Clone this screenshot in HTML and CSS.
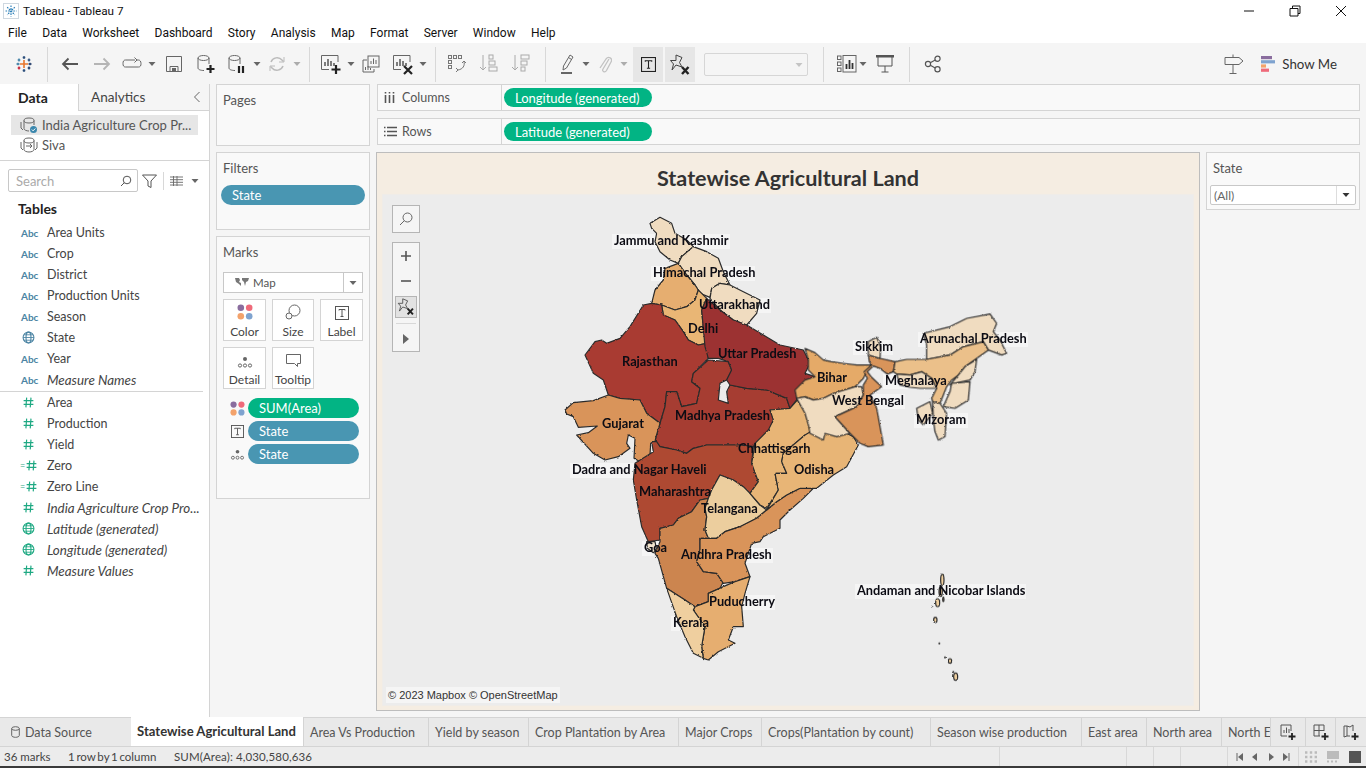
FILE: index.html
```html
<!DOCTYPE html>
<html lang="en">
<head>
<meta charset="utf-8">
<title>Tableau - Tableau 7</title>
<link rel="stylesheet" href="styles.css">
</head>
<body>
<svg class="defs" width="0" height="0">
  <defs>
    <symbol id="globe" viewBox="0 0 12 12"><circle cx="6" cy="6" r="5" fill="none" stroke="currentColor"/><ellipse cx="6" cy="6" rx="2.3" ry="5" fill="none" stroke="currentColor"/><path d="M1 6h10M1.8 3.5h8.4M1.8 8.5h8.4" stroke="currentColor" stroke-width=".8"/></symbol>
    <symbol id="hash" viewBox="0 0 12 12"><path d="M4.3 1.5 3.6 10.5M8.3 1.5 7.6 10.5M1.5 4.2h9M1.5 7.8h9" fill="none" stroke="currentColor" stroke-width="1.1"/></symbol>
    <symbol id="dots" viewBox="0 0 16 16"><circle cx="3.8" cy="3.8" r="3.3" fill="#8a6d9e"/><circle cx="12.2" cy="3.8" r="3.3" fill="#ef6a7a"/><circle cx="3.8" cy="12.2" r="3.3" fill="#f3a26b"/><circle cx="12.2" cy="12.200" r="3.3" fill="#7fa3cf"/></symbol>
    <symbol id="detail" viewBox="0 0 16 12"><circle cx="8" cy="3" r="2" fill="#666"/><g fill="none" stroke="#666"><circle cx="3" cy="9.5" r="1.6"/><circle cx="8" cy="9.5" r="1.6"/><circle cx="13" cy="9.5" r="1.6"/></g></symbol>
    <symbol id="tbox" viewBox="0 0 14 14"><rect x=".5" y=".5" width="13" height="13" fill="none" stroke="#555"/><path d="M4 4.5V3.5h6v1M7 3.5v7M5.5 10.5h3" fill="none" stroke="#555"/></symbol>
    <symbol id="pin" viewBox="0 0 22 22"><path d="M7 1 13 3.500 10.500 8.500 13 13 7 11 3 16 4.500 10 1.500 6.500 7 6.500Z" fill="none" stroke="#444"/><path d="M13 13 19.500 20M19.500 13 13 20" stroke="#222" stroke-width="2.400"/></symbol>
    <symbol id="caret" viewBox="0 0 8 6"><path d="M.5 1h7L4 5Z" fill="#666"/></symbol>
  </defs>
</svg>
<div class="app">
  <header class="titlebar">
    <svg class="applogo" viewBox="0 0 16 16"><rect x=".5" y=".5" width="15" height="15" fill="#fff" stroke="#cfd8e0"/><g stroke="#2c7fb8" stroke-width="1.2" fill="none"><path d="M8 2.5v11M2.5 8h11M4.2 4.2 11.8 11.8M11.8 4.2 4.2 11.8" stroke-dasharray="1.6 1"/></g></svg>
    <span class="apptitle">Tableau - Tableau 7</span>
    <div class="winctl">
      <svg viewBox="0 0 12 12"><path d="M1 6h10" stroke="#111"/></svg>
      <svg viewBox="0 0 12 12"><path d="M3.500 3V1h7.500v7.500H9M1 3.500h8v7.500H1Z" fill="none" stroke="#111"/></svg>
      <svg viewBox="0 0 12 12"><path d="M1 1 11 11M11 1 1 11" stroke="#111"/></svg>
    </div>
  </header>
  <nav class="menubar">
    <span>File</span><span>Data</span><span>Worksheet</span><span>Dashboard</span><span>Story</span><span>Analysis</span><span>Map</span><span>Format</span><span>Server</span><span>Window</span><span>Help</span>
  </nav>
  <div class="toolbar">
    <div class="tg g0">
      <span class="tb w47"><svg width="18" height="18" viewBox="0 0 18 18"><g stroke-width="1.300" fill="none"><path d="M9 5v8M5 9h8" stroke="#e8762c" stroke-width="1.600"/><path d="M9 1v3M7.700 2.500h2.600M14 3.500v3M12.700 5h2.600M9 14v3M7.700 15.500h2.600" stroke="#2c4f7c"/><path d="M4 3.500v3M2.700 5h2.600M1.500 9h3M3 7.700v2.600" stroke="#3f7fa6"/><path d="M14 11.500v3M12.700 13h2.600M13.500 9h3M15 7.700v2.600" stroke="#1f3a68"/><path d="M4 11.500v3M2.700 13h2.600" stroke="#c72035"/></g></svg></span>
    </div>
    <div class="tg g1">
      <span class="tb w32"><svg width="18" height="14" viewBox="0 0 18 14"><path d="M17 7H2M7.500 1.500 2 7l5.500 5.500" fill="none" stroke="#555" stroke-width="1.800"/></svg></span>
      <span class="tb w32"><svg width="18" height="14" viewBox="0 0 18 14"><path d="M1 7h15M10.500 1.500 16 7l-5.500 5.500" fill="none" stroke="#b5b5b5" stroke-width="1.800"/></svg></span>
      <span class="tb w28"><svg width="20" height="14" viewBox="0 0 20 14"><path d="M13 3H3.500C1.500 3 1 4.500 1 6.500S1.500 10 3.500 10h13c2 0 2.500-1.500 2.500-3.500S18 3 16.500 3H15M12.500 .5 15 3l-2.500 2.500" fill="none" stroke="#666"/></svg></span>
      <span class="tb w12"><svg class="car" viewBox="0 0 8 6"><use href="#caret"/></svg></span>
      <span class="tb w32"><svg width="16" height="16" viewBox="0 0 16 16"><path d="M.5.500h15v15H.5Z" fill="none" stroke="#666"/><path d="M4 15.500V10.500h8v5" fill="none" stroke="#666"/><rect x="6" y="12" width="4" height="3.500" fill="#666"/></svg></span>
      <span class="tb w32"><svg width="20" height="20" viewBox="0 0 20 20"><ellipse cx="7.500" cy="4" rx="5.500" ry="2.500" fill="none" stroke="#666"/><path d="M2 4v10c0 1.500 2.500 2.500 6 2.500M13 4v6" fill="none" stroke="#666"/><path d="M14.500 11v8M10.500 15h8" stroke="#222" stroke-width="2.200"/></svg></span>
      <span class="tb w30"><svg width="20" height="20" viewBox="0 0 20 20"><ellipse cx="7.500" cy="4" rx="5.500" ry="2.500" fill="none" stroke="#666"/><path d="M2 4v10c0 1.500 2.500 2.500 6 2.500M13 4v6" fill="none" stroke="#666"/><path d="M12 12v7M16 12v7" stroke="#222" stroke-width="2.200"/></svg></span>
      <span class="tb w10"><svg class="car" viewBox="0 0 8 6"><use href="#caret"/></svg></span>
      <span class="tb w30"><svg width="18" height="18" viewBox="0 0 18 18"><path d="M3 7a6.500 6.500 0 0 1 11-2l1.500 1.500M15 11a6.500 6.500 0 0 1-11 2L2.500 11.500" fill="none" stroke="#bbb" stroke-width="1.500"/><path d="M16 2v5h-5M2 16v-5h5" fill="none" stroke="#bbb"/></svg></span>
      <span class="tb w10 dim"><svg class="car" viewBox="0 0 8 6"><use href="#caret"/></svg></span>
    </div>
    <div class="tg g2">
      <span class="tb w32"><svg width="22" height="22" viewBox="0 0 22 22"><path d="M18 9V2.500H1.500v14H9" fill="none" stroke="#666"/><path d="M5 13V9M8 13V6M11 13V8M14 13v-3" stroke="#555" stroke-width="1.500"/><path d="M16 12v9M11.500 16.500h9" stroke="#222" stroke-width="2.200"/></svg></span>
      <span class="tb w8"><svg class="car" viewBox="0 0 8 6"><use href="#caret"/></svg></span>
      <span class="tb w32"><svg width="18" height="18" viewBox="0 0 18 18"><rect x="6" y="1" width="11" height="11" fill="#f5f5f5" stroke="#666"/><path d="M9 9V6M11.500 9V3.500M14 9V5" stroke="#666"/><path d="M5 5H1v12h11v-3" fill="none" stroke="#666"/><path d="M3.500 15v-3M6 15v-4M8.500 15v-2" stroke="#666"/></svg></span>
      <span class="tb w32"><svg width="22" height="22" viewBox="0 0 22 22"><path d="M18 9V2.500H1.500v14H9" fill="none" stroke="#666"/><path d="M5 13V9M8 13V6M11 13V8M14 13v-3" stroke="#555" stroke-width="1.500"/><path d="M12 13 20 21M20 13 12 21" stroke="#222" stroke-width="2.200"/></svg></span>
      <span class="tb w8"><svg class="car" viewBox="0 0 8 6"><use href="#caret"/></svg></span>
    </div>
    <div class="tg g3">
      <span class="tb w32"><svg width="20" height="20" viewBox="0 0 20 20"><g fill="none" stroke="#777"><rect x="1.500" y="1.500" width="3" height="3"/><rect x="6.500" y="1.500" width="3" height="3"/><rect x="11.500" y="1.500" width="3" height="3"/><rect x="1.500" y="6.500" width="3" height="3"/><rect x="1.500" y="11.500" width="3" height="3"/><path d="M17 7c1 5-1 8-6 9M9 14l2 2-2 2M15 9l2-2 2 2"/></g></svg></span>
      <span class="tb w32"><svg width="20" height="20" viewBox="0 0 20 20"><g fill="none" stroke="#aaa"><path d="M4 1v15M1 13l3 3 3-3"/><rect x="10" y="1" width="4" height="4"/><rect x="10" y="7" width="6" height="4"/><rect x="10" y="13" width="8" height="4"/></g></svg></span>
      <span class="tb w32"><svg width="20" height="20" viewBox="0 0 20 20"><g fill="none" stroke="#aaa"><path d="M4 1v15M1 13l3 3 3-3"/><rect x="10" y="1" width="8" height="4"/><rect x="10" y="7" width="6" height="4"/><rect x="10" y="13" width="4" height="4"/></g></svg></span>
    </div>
    <div class="tg g4">
      <span class="tb w28"><svg width="16" height="20" viewBox="0 0 16 20"><path d="M10 1l3 2-6.500 11L3 16l.5-4Z" fill="none" stroke="#666"/><path d="M8.500 3.500 11.500 5.500" stroke="#666"/><rect x="1" y="18" width="11" height="2" fill="#666"/></svg></span>
      <span class="tb w8"><svg class="car" viewBox="0 0 8 6"><use href="#caret"/></svg></span>
      <span class="tb w30"><svg width="14" height="20" viewBox="0 0 14 20"><path d="M11 5 5 15c-1.500 2.500 2 4 3.500 1.500L13 8c2-3.500-2.500-6.500-5-3L2 14" fill="none" stroke="#c2c2c2" stroke-width="1.300"/></svg></span>
      <span class="tb w8 dim"><svg class="car" viewBox="0 0 8 6"><use href="#caret"/></svg></span>
      <span class="tb on t5"><svg width="15" height="15" viewBox="0 0 14 14"><rect x=".5" y=".5" width="13" height="13" fill="none" stroke="#222"/><path d="M4 4.500V3.500h6v1M7 3.500v7M5.500 10.500h3" fill="none" stroke="#222"/></svg></span>
      <span class="tb on t3"><svg width="22" height="22" viewBox="0 0 22 22"><use href="#pin"/></svg></span>
      <span class="combo"><svg class="car" viewBox="0 0 8 6"><path d="M.5 1h7L4 5Z" fill="#c4c4c4"/></svg></span>
    </div>
    <div class="tg g5">
      <span class="tb w24"><svg width="20" height="18" viewBox="0 0 20 18"><g fill="none" stroke="#666"><rect x=".5" y="1" width="3.500" height="3.500"/><rect x=".5" y="7" width="3.500" height="3.500"/><rect x=".5" y="13" width="3.500" height="3.500"/><rect x="6" y=".5" width="13" height="16.500"/></g><path d="M9.500 14V9M12.500 14V5M15.500 14V8" stroke="#333" stroke-width="1.800"/></svg></span>
      <span class="tb w8"><svg class="car" viewBox="0 0 8 6"><use href="#caret"/></svg></span>
      <span class="tb w36"><svg width="18" height="18" viewBox="0 0 18 18"><rect x="0" y="0" width="18" height="2.500" fill="#555"/><path d="M2 2v9h14V2M9 11v6M5.500 17h7" fill="none" stroke="#555"/></svg></span>
    </div>
    <div class="tg g6">
      <span class="tb w32"><svg width="18" height="18" viewBox="0 0 18 18"><g fill="none" stroke="#555" stroke-width="1.200"><circle cx="4" cy="9" r="2.600"/><circle cx="13.500" cy="3.800" r="2.600"/><circle cx="13.500" cy="14.200" r="2.600"/><path d="M6.300 7.800 11.200 5M6.300 10.200 11.200 13"/></g></svg></span>
    </div>
    <div class="tright">
      <svg width="20" height="20" viewBox="0 0 20 20"><path d="M1 3.500h14l4 3.500-4 3.500H1Z" fill="none" stroke="#666"/><path d="M9 .5v3M9 10.500v9M5.500 19.500h7" fill="none" stroke="#666"/></svg>
      <svg class="sm" width="15" height="16" viewBox="0 0 15 16"><rect y="0" width="11" height="3.200" fill="#8a6d9e"/><rect y="4.200" width="14" height="3.200" fill="#7fa3cf"/><rect y="8.400" width="5" height="3.200" fill="#f3a26b"/><rect y="12.600" width="8" height="3.200" fill="#ef6a7a"/></svg>
      <span class="showme">Show Me</span>
    </div>
  </div>

  <main class="main">
    <aside class="sidebar">
      <div class="sidetabs">
        <span class="stab active">Data</span>
        <span class="stab rest">Analytics<svg width="8" height="12" viewBox="0 0 8 12"><path d="M6.500 1 1.500 6l5 5" fill="none" stroke="#666"/></svg></span>
      </div>
      <div class="sources">
        <div class="src sel"><svg width="18" height="18" viewBox="0 0 18 18"><ellipse cx="9" cy="4.500" rx="5" ry="2.500" fill="none" stroke="#666"/><path d="M4 4.500v8c0 1.500 2.500 2.500 5 2.500M14 4.500V9M1 6v6l2 2" fill="none" stroke="#666"/><circle cx="13.500" cy="13.500" r="3.500" fill="#3a87ad"/><path d="M11.800 13.500l1.300 1.300 2.200-2.300" fill="none" stroke="#fff"/></svg><span>India Agriculture Crop Pr...</span></div>
        <div class="src"><svg width="18" height="18" viewBox="0 0 18 18"><ellipse cx="9" cy="4.500" rx="5" ry="2.500" fill="none" stroke="#666"/><path d="M4 4.500v9c0 1.500 2.500 2.500 5 2.500s5-1 5-2.500v-9M1 6v6l2 2M17 6v6l-2 2M6 10h6l-2-2M12 10l-2 2" fill="none" stroke="#666"/></svg><span>Siva</span></div>
      </div>
      <div class="searchrow">
        <div class="search"><span>Search</span><svg width="12" height="12" viewBox="0 0 12 12"><circle cx="7" cy="5" r="3.800" fill="none" stroke="#555"/><path d="M4.300 7.700 1 11" stroke="#555"/></svg></div>
        <svg class="funnel" width="15" height="14" viewBox="0 0 15 14"><path d="M.5 1h14L9 7v6.500L6 12V7Z" fill="none" stroke="#555"/></svg>
        <i class="vsep"></i>
        <svg width="13" height="10" viewBox="0 0 13 10"><path d="M0 1h13M0 3.700h13M0 6.300h13M0 9h13M3.500 0v10M7 0v10" stroke="#666" stroke-width=".9" fill="none"/></svg>
        <svg class="car2" viewBox="0 0 8 6"><use href="#caret"/></svg>
      </div>
      <div class="tables">Tables</div>
      <ul class="fields dims">
        <li><span class="ft abc">Abc</span>Area Units</li>
        <li><span class="ft abc">Abc</span>Crop</li>
        <li><span class="ft abc">Abc</span>District</li>
        <li><span class="ft abc">Abc</span>Production Units</li>
        <li><span class="ft abc">Abc</span>Season</li>
        <li><span class="ft"><svg class="geo"><use href="#globe"/></svg></span>State</li>
        <li><span class="ft abc">Abc</span>Year</li>
        <li class="it"><span class="ft abc">Abc</span>Measure Names</li>
      </ul>
      <ul class="fields meas">
        <li><span class="ft"><svg class="num"><use href="#hash"/></svg></span>Area</li>
        <li><span class="ft"><svg class="num"><use href="#hash"/></svg></span>Production</li>
        <li><span class="ft"><svg class="num"><use href="#hash"/></svg></span>Yield</li>
        <li><span class="ft calc">=<svg class="num"><use href="#hash"/></svg></span>Zero</li>
        <li><span class="ft calc">=<svg class="num"><use href="#hash"/></svg></span>Zero Line</li>
        <li class="it"><span class="ft"><svg class="num"><use href="#hash"/></svg></span>India Agriculture Crop Pro...</li>
        <li class="it"><span class="ft"><svg class="numg"><use href="#globe"/></svg></span>Latitude (generated)</li>
        <li class="it"><span class="ft"><svg class="numg"><use href="#globe"/></svg></span>Longitude (generated)</li>
        <li class="it"><span class="ft"><svg class="num"><use href="#hash"/></svg></span>Measure Values</li>
      </ul>
    </aside>

    <section class="cards">
      <div class="card pages"><h3>Pages</h3></div>
      <div class="card filters"><h3>Filters</h3><div class="pill blue fpill">State</div></div>
      <div class="card marks">
        <h3>Marks</h3>
        <div class="marktype"><svg width="16" height="11" viewBox="0 0 16 11"><path d="M1 1h4l1 2-1 2 2 1v3l-2-2-3-2ZM8 1h7l-1 3-2 1-1 4-1-4-2-2Z" fill="#777"/></svg><span>Map</span><i><svg class="car" viewBox="0 0 8 6"><use href="#caret"/></svg></i></div>
        <div class="markgrid">
          <div class="mbtn"><svg width="16" height="16"><use href="#dots"/></svg><span>Color</span></div>
          <div class="mbtn"><svg width="16" height="16" viewBox="0 0 16 16"><circle cx="9.500" cy="6.500" r="5.500" fill="none" stroke="#666"/><circle cx="4" cy="12" r="3" fill="#f9f9f9" stroke="#666"/></svg><span>Size</span></div>
          <div class="mbtn"><svg width="14" height="14"><use href="#tbox"/></svg><span>Label</span></div>
          <div class="mbtn"><svg width="16" height="12"><use href="#detail"/></svg><span>Detail</span></div>
          <div class="mbtn"><svg width="15" height="14" viewBox="0 0 15 14"><path d="M.5.500h14v9h-3v3l-3-3H.5Z" fill="none" stroke="#666"/></svg><span>Tooltip</span></div>
        </div>
        <div class="mrow"><svg width="15" height="15"><use href="#dots"/></svg><div class="pill green">SUM(Area)</div></div>
        <div class="mrow"><svg width="13" height="13"><use href="#tbox"/></svg><div class="pill blue">State</div></div>
        <div class="mrow"><svg width="15" height="11"><use href="#detail"/></svg><div class="pill blue">State</div></div>
      </div>
    </section>

    <section class="work">
      <div class="shelf"><div class="shlabel"><svg width="13" height="11" viewBox="0 0 13 11"><path d="M1.500 3v8M5.500 3v8M9.500 3v8" stroke="#555" stroke-width="1.600"/><path d="M1.500 0v1.500M5.500 0v1.500M9.500 0v1.500" stroke="#555" stroke-width="1.600"/></svg>Columns</div><div class="pill green spill">Longitude (generated)</div></div>
      <div class="shelf"><div class="shlabel"><svg width="13" height="11" viewBox="0 0 13 11"><path d="M3 1.500h10M3 5.500h10M3 9.500h10M0 1.500h1.500M0 5.500h1.500M0 9.500h1.500" stroke="#555" stroke-width="1.600"/></svg>Rows</div><div class="pill green spill">Latitude (generated)</div></div>
      <div class="stage">
        <div class="dash">
          <h1>Statewise Agricultural Land</h1>
          <div class="mappane">
            <svg class="map" viewBox="383 195 810 510" width="810" height="510">
              <defs><filter id="rough" filterUnits="userSpaceOnUse" x="383" y="195" width="810" height="510"><feTurbulence type="fractalNoise" baseFrequency=".35" numOctaves="2" seed="4"/><feDisplacementMap in="SourceGraphic" scale="2.200" xChannelSelector="R" yChannelSelector="G"/></filter></defs>
              <g class="halo">
                <rect x="612" y="234" width="118" height="15"/><rect x="651" y="266" width="104" height="15"/><rect x="697" y="298" width="74" height="15"/><rect x="853" y="340" width="40" height="15"/><rect x="918" y="332" width="110" height="15"/><rect x="883" y="374" width="66" height="15"/><rect x="830" y="394" width="75" height="15"/><rect x="914" y="413" width="54" height="15"/><rect x="570" y="463" width="138" height="15"/><rect x="642" y="541" width="26" height="15"/><rect x="679" y="548" width="94" height="15"/><rect x="707" y="595" width="68" height="15"/><rect x="671" y="616" width="38" height="15"/><rect x="855" y="584" width="171" height="15"/>
              </g>
              <g class="states" filter="url(#rough)">
                <g transform="translate(560 210) scale(.33333)">
                  <polygon fill="#f0dcc0" points="270,40 300,22 335,40 345,70 380,90 400,110 365,140 355,160 330,150 300,125 285,95 290,70 275,55"/>
                  <polygon fill="#f0dcc0" points="400,110 440,125 475,145 490,185 510,225 480,220 455,235 450,262 420,250 405,225 380,195 355,160 365,140"/>
                  <polygon fill="#e6ae6f" points="355,160 380,195 405,225 415,240 405,270 380,290 345,300 305,285 275,280 285,240 310,210 315,175"/>
                  <polygon fill="#e9b675" points="415,240 440,265 425,300 430,355 440,400 415,405 385,390 370,365 345,330 310,315 305,285 345,300 380,290 405,270"/>
                  <polygon fill="#f0dcc0" points="455,235 480,220 510,225 550,245 600,270 590,310 560,345 520,330 480,300 450,265"/>
                  <polygon fill="#a93b30" points="275,280 305,285 310,315 345,330 370,365 385,390 415,405 440,400 445,445 400,490 395,515 420,535 410,580 365,590 350,545 320,545 315,590 300,640 260,610 240,570 180,565 145,555 130,510 100,490 75,435 105,395 125,390 140,400 180,385 210,350 250,285"/>
                  <polygon fill="#a63c30" points="300,640 315,590 320,545 350,545 365,590 410,580 420,535 395,515 400,490 445,450 505,455 515,480 500,510 480,520 475,570 505,580 500,545 510,525 560,535 620,540 680,565 690,595 630,600 650,625 640,660 585,700 580,710 540,705 470,705 440,705 400,715 380,730 350,720 300,710 285,695 288,680"/>
                  <polygon fill="#9c3331" points="440,265 480,300 520,330 560,345 610,375 660,405 730,420 750,460 735,490 765,500 710,545 710,570 690,595 680,565 620,540 560,535 510,525 500,510 515,480 505,455 475,445 445,445 435,410 425,300"/>
                  <polygon fill="#d9945a" points="15,600 40,578 100,572 145,555 180,565 240,570 260,610 300,640 288,680 285,695 272,700 270,735 240,755 222,745 225,685 205,675 200,700 210,715 175,740 135,750 100,730 50,675 85,668 112,648 55,652 40,620 20,612"/>
                </g>
                <g transform="translate(560 430) scale(.33333)">
                  <polygon fill="#ae4a32" points="225,100 280,65 275,35 290,35 300,50 350,60 380,70 400,55 440,45 470,45 540,45 580,50 575,100 595,155 570,190 550,170 520,150 480,135 455,180 445,205 420,210 395,245 355,265 340,285 300,295 300,330 265,335 245,290 230,210 220,150"/>
                  <polygon fill="#cc8550" points="300,295 340,285 355,265 395,245 420,210 445,205 435,235 440,260 435,300 445,325 420,325 420,360 410,395 430,425 470,430 490,455 480,475 445,490 445,515 405,530 375,510 320,475 295,385 285,370 300,335"/>
                  <polygon fill="#f0e2cc" points="260,335 285,335 290,360 280,368 262,355"/>
                  <polygon fill="#ecce9e" points="480,135 520,150 550,170 570,190 600,225 620,240 590,265 540,290 495,305 470,325 445,325 435,300 440,260 435,235 445,205 455,180"/>
                  <polygon fill="#d9945a" points="420,325 445,325 470,325 495,305 540,290 590,265 620,240 650,215 680,195 720,175 760,175 730,205 690,240 660,270 660,295 610,320 600,335 575,340 565,370 555,400 570,440 525,455 490,460 470,430 430,425 410,395 420,360"/>
                  <polygon fill="#e6ae6f" points="445,490 490,470 525,455 570,440 555,490 545,530 550,590 520,590 505,630 525,640 475,665 445,690 430,685 425,650 435,590 400,540 405,530 445,515"/>
                  <polygon fill="#efcf9f" points="320,475 375,510 405,530 400,540 435,590 425,650 430,685 400,670 375,620 350,560"/>
                  <polygon fill="#e8b576" points="630,-60 690,-65 712,-90 740,-50 755,10 735,15 670,70 665,95 680,130 645,130 655,180 620,235 600,225 570,190 595,155 575,100 585,40 625,0 640,-30"/>
                  <polygon fill="#e8b576" points="735,15 760,0 830,15 860,10 880,20 895,45 860,110 820,135 770,175 720,175 680,195 650,215 620,240 655,180 645,130 680,130 665,95 670,70"/>
                </g>
                <g transform="translate(780 300) scale(.33333)">
                  <polygon fill="#e5aa68" points="75,145 105,158 130,180 155,185 190,190 230,195 275,195 262,210 250,235 225,260 160,280 130,295 100,300 75,290 50,295 45,270 75,240 105,230 85,210 85,180"/>
                  <polygon fill="#f0dcc0" points="50,295 75,290 100,300 130,295 160,280 225,260 245,260 250,285 230,320 165,350 210,400 170,410 135,400 130,420 90,400 85,375 75,340"/>
                  <polygon fill="#d9945a" points="265,165 300,175 345,185 340,215 322,222 300,205 280,198 262,215 275,232 305,260 270,285 290,325 300,380 310,435 265,440 240,430 210,400 165,350 230,320 250,285 250,255 262,235 252,215 275,195 268,185"/>
                  <polygon fill="#f0dcc0" points="265,125 290,112 302,140 300,175 265,165"/>
                  <polygon fill="#f0dcc0" points="440,135 430,100 510,80 560,55 630,42 650,70 640,95 660,120 680,160 665,165 625,150 610,125 550,140 510,165 440,178"/>
                  <polygon fill="#ebc08a" points="345,185 380,178 440,178 510,165 550,140 610,125 625,150 590,175 555,200 535,225 515,240 500,260 480,310 460,310 455,295 470,265 455,235 425,215 390,225 350,222 340,215"/>
                  <polygon fill="#f0dcc0" points="350,222 390,225 425,215 455,235 470,265 420,265 390,262 360,255"/>
                  <polygon fill="#f0dcc0" points="535,225 555,200 590,178 585,215 570,240 520,250 510,255"/>
                  <polygon fill="#f0dcc0" points="515,250 570,245 565,300 525,325 490,320 510,275"/>
                  <polygon fill="#f0dcc0" points="458,305 480,310 500,340 495,410 475,420 465,395 460,360"/>
                  <polygon fill="#f0dcc0" points="410,325 450,305 458,340 430,375 415,360"/>
                </g>
                <g transform="translate(900 560) scale(.33333)">
                  <ellipse fill="#efcf9f" cx="127" cy="60" rx="5" ry="17"/><ellipse fill="#efcf9f" cx="122" cy="95" rx="5" ry="14"/><ellipse fill="#efcf9f" cx="113" cy="128" rx="6" ry="12"/><ellipse fill="#efcf9f" cx="130" cy="118" rx="2" ry="7"/><ellipse fill="#efcf9f" cx="106" cy="180" rx="5" ry="8"/><ellipse fill="#efcf9f" cx="167" cy="350" rx="6" ry="11"/><ellipse fill="#efcf9f" cx="150" cy="303" rx="5" ry="7"/><circle fill="#333" cx="118" cy="250" r="3"/><circle fill="#333" cx="135" cy="292" r="3"/><circle fill="#333" cx="95" cy="140" r="2"/><circle fill="#333" cx="160" cy="336" r="3"/>
                </g>
              </g>
              <g class="labels">
                <text x="614" y="245">Jammu and Kashmir</text><text x="653" y="277">Himachal Pradesh</text><text x="699" y="309">Uttarakhand</text><text x="688" y="333">Delhi</text><text x="622" y="366">Rajasthan</text><text x="718" y="358">Uttar Pradesh</text><text x="855" y="351">Sikkim</text><text x="920" y="343">Arunachal Pradesh</text><text x="817" y="382">Bihar</text><text x="885" y="385">Meghalaya</text><text x="832" y="405">West Bengal</text><text x="675" y="420">Madhya Pradesh</text><text x="916" y="424">Mizoram</text><text x="602" y="428">Gujarat</text><text x="738" y="453">Chhattisgarh</text><text x="572" y="474">Dadra and Nagar Haveli</text><text x="794" y="474">Odisha</text><text x="639" y="496">Maharashtra</text><text x="701" y="513">Telangana</text><text x="644" y="552">Goa</text><text x="681" y="559">Andhra Pradesh</text><text x="857" y="595">Andaman and Nicobar Islands</text><text x="709" y="606">Puducherry</text><text x="673" y="627">Kerala</text>
              </g>
            </svg>
            <div class="mapsearch"><svg width="14" height="14" viewBox="0 0 14 14"><circle cx="8.500" cy="5.500" r="4.500" fill="none" stroke="#666"/><path d="M5.300 8.700 1 13" stroke="#666"/></svg></div>
            <div class="mapzoom">
              <svg class="zp" width="12" height="12" viewBox="0 0 12 12"><path d="M1 6h10M6 1v10" stroke="#555" stroke-width="1.600"/></svg>
              <svg class="zm" width="12" height="12" viewBox="0 0 12 12"><path d="M1 6h10" stroke="#555" stroke-width="1.600"/></svg>
              <span class="mappin"><svg width="18" height="18" viewBox="0 0 22 22"><use href="#pin"/></svg></span>
              <i class="mapdiv"></i>
              <svg width="8" height="12" viewBox="0 0 8 12"><path d="M1 1l6 5-6 5Z" fill="#666"/></svg>
            </div>
            <div class="credit">© 2023 Mapbox © OpenStreetMap</div>
          </div>
        </div>
        <div class="statefilter">
          <h3>State</h3>
          <div class="sfselect"><span>(All)</span><i><svg class="car" viewBox="0 0 8 6"><path d="M.5 1h7L4 5Z" fill="#333"/></svg></i></div>
        </div>
      </div>
    </section>
  </main>

  <div class="tabs">
    <span class="tab ds"><svg width="9" height="12" viewBox="0 0 9 12"><ellipse cx="4.500" cy="2.500" rx="3.800" ry="1.800" fill="none" stroke="#666"/><path d="M.7 2.500v7c0 1 1.800 1.800 3.800 1.800s3.800-.8 3.800-1.800v-7" fill="none" stroke="#666"/></svg>Data Source</span>
    <span class="tab act">Statewise Agricultural Land</span>
    <span class="tab w1">Area Vs Production</span>
    <span class="tab w2">Yield by season</span>
    <span class="tab w3">Crop Plantation by Area</span>
    <span class="tab w4">Major Crops</span>
    <span class="tab w5">Crops(Plantation by count)</span>
    <span class="tab w6">Season wise production</span>
    <span class="tab w7">East area</span>
    <span class="tab w8t">North area</span>
    <span class="tab w9">North E</span>
    <span class="tabicon a"><svg width="16" height="16" viewBox="0 0 16 16"><path d="M11 7V1H1v11h6" fill="none" stroke="#555"/><path d="M4 9V6M6.500 9V3.500M9 9V5" stroke="#555"/><path d="M12 9v7M8.500 12.500h7" stroke="#222" stroke-width="1.800"/></svg></span>
    <span class="tabicon b"><svg width="16" height="16" viewBox="0 0 16 16"><path d="M11 7V1H1v11h6M1 6.500h10M6 1v11" fill="none" stroke="#555"/><path d="M12 9v7M8.500 12.500h7" stroke="#222" stroke-width="1.800"/></svg></span>
    <span class="tabicon c"><svg width="16" height="16" viewBox="0 0 16 16"><path d="M1 2h3l3 1 3-2v6M7 12H4L1 13V2M4 2v10" fill="none" stroke="#555"/><path d="M12 9v7M8.500 12.500h7" stroke="#222" stroke-width="1.800"/></svg></span>
  </div>
  <footer class="status">
    <span class="st s1">36 marks</span><span class="st s2">1 row by 1 column</span><span class="st s3">SUM(Area): 4,030,580,636</span>
    <i class="cell c1"></i><i class="cell c2"></i><i class="cell c3"></i><i class="cell c4"></i>
    <div class="nav">
      <svg width="8" height="8" viewBox="0 0 8 8"><path d="M1 0v8" stroke="#666"/><path d="M7 0v8L2 4Z" fill="#666"/></svg>
      <svg width="8" height="8" viewBox="0 0 8 8"><path d="M6 0v8L1 4Z" fill="#666"/></svg>
      <svg width="8" height="8" viewBox="0 0 8 8"><path d="M2 0v8l5-4Z" fill="#666"/></svg>
      <svg width="8" height="8" viewBox="0 0 8 8"><path d="M7 0v8" stroke="#666"/><path d="M1 0v8l5-4Z" fill="#666"/></svg>
    </div>
    <div class="views">
      <svg width="12" height="12" viewBox="0 0 12 12"><path d="M0 1.500h12M0 6h12M0 10.500h12" stroke="#bbb" stroke-width="2.400" stroke-dasharray="2.400 2.400"/></svg>
      <svg width="12" height="12" viewBox="0 0 12 12"><rect width="12" height="8" fill="#bbb"/><path d="M0 10.500h12" stroke="#bbb" stroke-width="2" stroke-dasharray="2 2"/></svg>
      <svg width="12" height="12" viewBox="0 0 12 12"><rect width="12" height="12" fill="#555"/></svg>
    </div>
  </footer>
  <div class="bottomedge"></div>
</div>
</body>
</html>
```

FILE: styles.css
```css
* { box-sizing: border-box; }
html, body { margin: 0; height: 100%; overflow: hidden; }
body { font-family: "Lato", "Noto Sans", sans-serif; font-size: 13px; color: #333; background: #fff; }
ul { list-style: none; margin: 0; padding: 0; }
h1, h3 { margin: 0; font-weight: 400; }
i { font-style: normal; }
.defs { position: absolute; }
.app { width: 1366px; height: 768px; display: flex; flex-direction: column; }

.titlebar { height: 22px; display: flex; align-items: center; padding-left: 3px; font-family: "Roboto", sans-serif; font-size: 11.700px; color: #111; background: #fff; }
.applogo { width: 16px; height: 16px; margin-right: 4px; }
.winctl { margin-left: auto; display: flex; height: 22px; align-items: center; padding-right: 19px; gap: 34px; }
.winctl svg { width: 12px; height: 12px; }

.menubar { height: 21px; display: flex; align-items: center; padding-left: 8px; gap: 15.300px; font-family: "Roboto", sans-serif; font-size: 12px; color: #111; background: #fff; }

.toolbar { height: 41px; display: flex; align-items: stretch; background: #f5f5f5; }
.tg { display: flex; align-items: center; height: 35px; margin-top: 4px; border-right: 1px solid #d8d8d8; }
.tb { height: 34px; margin-bottom: 1px; display: flex; align-items: center; justify-content: center; flex: none; }
.w8 { width: 8px; } .w10 { width: 10px; } .w12 { width: 12px; } .w24 { width: 24px; } .w28 { width: 28px; } .w30 { width: 30px; } .w32 { width: 32px; } .w36 { width: 36px; } .w47 { width: 47px; }
.car { width: 8px; height: 6px; }
.dim { opacity: .5; }
.g0 { width: 48px; }
.g1 { width: 262px; padding-left: 6px; }
.g2 { width: 126px; padding-left: 5px; }
.g3 { width: 110px; padding-left: 5px; }
.g4 { width: 278px; padding-left: 8px; }
.g5 { width: 86px; padding-left: 11px; }
.g6 { border-right: 0; padding-left: 7px; }
.on { width: 30px; height: 35px; margin-bottom: 0; background: #e6e6e6; }
.t5 { margin-left: 5px; }
.t3 { margin-left: 2px; }
.combo { width: 104px; height: 23px; margin-left: 9px; border: 1px solid #d6d6d6; border-radius: 2px; display: flex; align-items: center; justify-content: flex-end; padding-right: 4px; }
.tright { margin-left: auto; display: flex; align-items: center; padding-right: 29px; }
.sm { margin-left: 17px; margin-right: 6px; }
.showme { font-size: 13.300px; color: #333; }

.main { height: 633px; display: flex; background: #f5f5f5; }
.sidebar { width: 210px; flex: none; background: #fff; border-right: 1px solid #d4d4d4; }
.sidetabs { height: 27px; display: flex; font-size: 14px; }
.stab { display: flex; align-items: center; padding-bottom: 1px; }
.stab.active { width: 78px; padding-left: 18px; font-weight: 700; color: #222; }
.stab.rest { flex: 1; padding-left: 12px; background: #f5f5f5; border-left: 1px solid #d4d4d4; border-bottom: 1px solid #d4d4d4; color: #444; justify-content: space-between; padding-right: 8px; font-size: 13.600px; }
.sources { height: 50px; padding: 4px 11px 0; border-bottom: 1px solid #d4d4d4; }
.src { height: 20px; width: 187px; display: flex; align-items: center; gap: 4px; padding-left: 9px; color: #555; font-size: 13px; }
.src.sel { background: #e6e6e6; }
.searchrow { height: 31px; display: flex; align-items: center; padding: 8px 0 0 8px; }
.search { width: 130px; height: 23px; border: 1px solid #c8c8c8; border-radius: 2px; display: flex; align-items: center; justify-content: space-between; padding: 0 5px 0 7px; color: #aaa; }
.funnel { margin-left: 4px; }
.vsep { width: 1px; height: 18px; background: #d8d8d8; margin: 0 6px; }
.car2 { width: 8px; height: 6px; margin-left: 8px; }
.tables { height: 27px; margin-top: 3px; padding-left: 18px; font-size: 14px; font-weight: 700; color: #222; display: flex; align-items: center; }
.fields li { height: 21px; display: flex; align-items: center; font-size: 12.500px; color: #444; padding-left: 20px; white-space: nowrap; }
.fields li.it { font-style: italic; font-size: 13.400px; }
.ft { width: 27px; flex: none; display: flex; align-items: center; color: #3f7fa6; font-style: normal; }
.fields .abc { font-size: 10px; font-weight: 700; color: #4b84a3; padding-left: 1px; }
.geo { width: 13px; height: 13px; margin-left: 2px; color: #4b84a3; }
.num { width: 13px; height: 13px; margin-left: 2px; color: #1fa983; }
.numg { width: 13px; height: 13px; margin-left: 2px; color: #1fa983; }
.calc { color: #1fa983; font-size: 9px; }
.calc .num { margin-left: 0; }
.dims { height: 170px; border-bottom: 1px solid #d4d4d4; margin: 0 6px 0 0; }

.cards { width: 166px; flex: none; padding: 0 0 0 6px; display: flex; flex-direction: column; gap: 6px; }
.card { width: 154px; background: #f9f9f9; border: 1px solid #d4d4d4; padding: 7px 6px; }
.card h3 { font-size: 13px; color: #555; line-height: 16px; }
.pages { height: 62px; }
.filters { height: 78px; }
.marks { height: 263px; }
.pill { height: 20px; border-radius: 10px; color: #fff; font-size: 13px; padding-left: 11px; display: flex; align-items: center; }
.blue { background: #4996b2; }
.green { background: #02b484; }
.fpill { margin: 9px -2px 0 -2px; padding-left: 11px; }
.marktype { height: 21px; margin-top: 12px; width: 140px; background: #fff; border: 1px solid #c8c8c8; display: flex; align-items: center; padding-left: 10px; color: #555; }
.marktype span { margin-left: 3px; font-size: 11.500px; }
.marktype i { margin-left: auto; width: 19px; height: 100%; border-left: 1px solid #c8c8c8; display: flex; align-items: center; justify-content: center; }
.markgrid { display: grid; grid-template-columns: 43px 42px 43px; gap: 6px; margin-top: 6px; }
.mbtn { height: 42px; background: #fff; border: 1px solid #d4d4d4; display: flex; flex-direction: column; align-items: center; justify-content: flex-end; font-size: 12px; color: #444; padding-bottom: 1px; }
.mbtn svg { margin-bottom: 4px; }
.mrow { display: flex; align-items: center; height: 20px; margin: 3px 0 0 0; }
.markgrid + .mrow { margin-top: 9px; }
.mrow svg { width: 15px; flex: none; margin: 0 3px 0 7px; }
.mrow .pill { width: 111px; }

.work { flex: 1; min-width: 0; padding-right: 6px; display: flex; flex-direction: column; }
.shelf { height: 27px; margin: 0 0 7px 1px; background: #f9f9f9; border: 1px solid #d4d4d4; display: flex; align-items: center; }
.shlabel { width: 124px; height: 100%; border-right: 1px solid #d4d4d4; display: flex; align-items: center; gap: 5px; padding-left: 6px; font-size: 12.500px; color: #555; }
.spill { width: 148px; height: 19px; margin-left: 2px; }
.stage { display: flex; gap: 6px; }
.dash { width: 824px; height: 559px; background: #f5ede2; border: 1px solid #bdbdbd; padding: 0 6px; display: flex; flex-direction: column; }
.dash h1 { height: 42px; font-size: 21.600px; font-weight: 700; color: #333; text-align: center; line-height: 50px; }
.mappane { position: relative; flex: none; width: 810px; height: 510px; background: #ececec; outline: 1px solid #efece8; }
.map { display: block; }
.halo rect { fill: #f5f5f5; }
.states polygon, .states ellipse { stroke: #2c2c2c; stroke-width: 3.600; stroke-linejoin: round; }
.labels text { font-family: "Lato", "Noto Sans", sans-serif; font-size: 12.800px; font-weight: 700; fill: #0c0c14; }
.mapsearch { position: absolute; left: 9px; top: 10px; width: 28px; height: 28px; background: #f5f5f5; border: 1px solid #b5b5b5; display: flex; align-items: center; justify-content: center; }
.mapzoom { position: absolute; left: 9px; top: 47px; width: 28px; height: 110px; background: #f5f5f5; border: 1px solid #b5b5b5; display: flex; flex-direction: column; align-items: center; padding-top: 7px; }
.mapzoom svg { flex: none; }
.zp { margin-bottom: 13px; }
.zm { margin-bottom: 9px; }
.mappin { width: 22px; height: 22px; background: #e2e2e2; border: 1px solid #b5b5b5; display: flex; align-items: center; justify-content: center; }
.mapdiv { width: 20px; height: 1px; background: #d8d8d8; margin: 5px 0 9px; }
.credit { position: absolute; left: 3px; bottom: 2px; padding: 0 2px; background: #f5f5f5; font-family: "Liberation Sans", sans-serif; font-size: 11px; color: #333; line-height: 16px; }
.statefilter { width: 154px; height: 58px; background: #f9f9f9; border: 1px solid #d4d4d4; padding: 7px 3px 0; }
.statefilter h3 { font-size: 13px; line-height: 16px; padding-left: 3px; color: #555; }
.sfselect { height: 20px; margin-top: 9px; background: #fff; border: 1px solid #c8c8c8; border-radius: 2px; display: flex; align-items: center; padding-left: 3px; font-size: 12px; color: #666; }
.sfselect i { margin-left: auto; width: 19px; height: 100%; border-left: 1px solid #ddd; display: flex; align-items: center; justify-content: center; }

.tabs { height: 30px; display: flex; background: #e9e9e9; border-top: 1px solid #d4d4d4; border-bottom: 1px solid #d4d4d4; font-size: 12.500px; color: #555; }
.tab { display: flex; align-items: center; justify-content: flex-start; padding-left: 6px; border-right: 1px solid #d4d4d4; white-space: nowrap; overflow: hidden; flex: none; }
.ds { width: 131px; gap: 5px; padding-left: 11px; border-right: 0; }
.act { width: 173px; background: #fff; font-weight: 700; font-size: 13.100px; color: #333; margin-top: -1px; padding-bottom: 1px; }
.w1 { width: 125px; } .w2 { width: 100px; } .w3 { width: 150px; } .w4 { width: 83px; } .w5 { width: 169px; } .w6 { width: 151px; } .w7 { width: 65px; } .w8t { width: 75px; } .w9 { width: 49px; }
.tabicon { display: flex; align-items: center; justify-content: center; border-left: 1px solid #d4d4d4; flex: none; }
.tabicon.a { width: 34px; border-left: 0; } .tabicon.b { width: 30px; } .tabicon.c { width: 31px; }

.status { position: relative; height: 19px; background: #ececec; font-size: 11.500px; color: #444; display: flex; align-items: center; }
.st { white-space: nowrap; }
.s1 { margin-left: 4px; width: 64px; } .s2 { width: 106px; word-spacing: -1.200px; }
.s3 { letter-spacing: .12px; }
.cell { position: absolute; top: 0; bottom: 0; width: 1px; background: #d8d8d8; }
.c1 { left: 999px; } .c2 { left: 1126px; } .c3 { left: 1153px; } .c4 { left: 1180px; }
.nav { position: absolute; left: 1227px; width: 72px; height: 100%; border-left: 1px solid #d8d8d8; border-right: 1px solid #d8d8d8; display: flex; align-items: center; justify-content: space-evenly; }
.views { position: absolute; left: 1305px; display: flex; align-items: center; gap: 10px; }
.bottomedge { height: 2px; background: #3a3a3a; }
```
